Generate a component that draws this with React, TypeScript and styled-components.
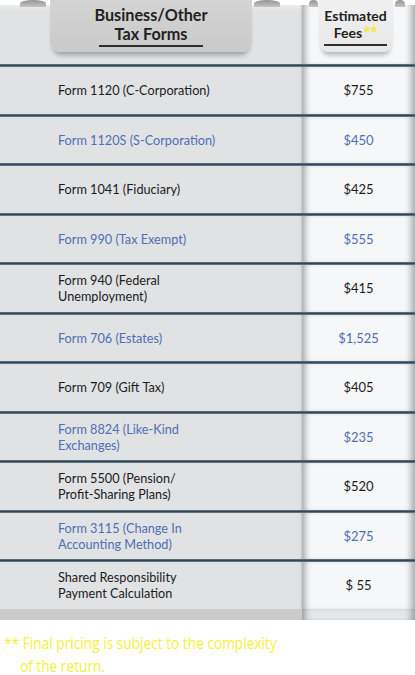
import React from "react";
import styled, { createGlobalStyle } from "styled-components";

const Global = createGlobalStyle`
  html, body { margin: 0; padding: 0; background: #ffffff; }
  body { font-family: Lato, "Open Sans", Arial, sans-serif; }
`;

type Item = { name: string[]; price: string };

const items: Item[] = [
  { name: ["Form 1120 (C-Corporation)"], price: "$755" },
  { name: ["Form 1120S (S-Corporation)"], price: "$450" },
  { name: ["Form 1041 (Fiduciary)"], price: "$425" },
  { name: ["Form 990 (Tax Exempt)"], price: "$555" },
  { name: ["Form 940 (Federal", "Unemployment)"], price: "$415" },
  { name: ["Form 706 (Estates)"], price: "$1,525" },
  { name: ["Form 709 (Gift Tax)"], price: "$405" },
  { name: ["Form 8824 (Like-Kind", "Exchanges)"], price: "$235" },
  { name: ["Form 5500 (Pension/", "Profit-Sharing Plans)"], price: "$520" },
  { name: ["Form 3115 (Change In", "Accounting Method)"], price: "$275" },
  { name: ["Shared Responsibility", "Payment Calculation"], price: "$ 55" },
];

const Page = styled.div`
  width: 415px;
  display: flex;
  flex-direction: column;
`;

const Table = styled.div`
  display: flex;
  flex-direction: column;
`;

const Grid = styled.div<{ $h: number }>`
  display: grid;
  grid-template-columns: 302px 113px;
  height: ${(p) => p.$h}px;
`;

const LeftCell = styled.div`
  background: #e1e2e4;
  box-shadow: inset -2px 0 2px -1px rgba(0, 0, 0, 0.12);
`;

const RightCell = styled.div`
  background: #f6f7f9;
  box-shadow: inset 7px 0 6px -4px rgba(0, 0, 0, 0.34),
    inset -9px 0 6px -5px rgba(0, 0, 0, 0.3);
`;

const HeadLeft = styled(LeftCell)`
  border-top: 5px solid #ffffff;
  padding-left: 50px;
  display: flex;
  align-items: flex-start;
  background: linear-gradient(to bottom, #eceded 0px, #e1e2e4 6px);
`;

const HeadRight = styled(RightCell)`
  border-top: 5px solid #ffffff;
  display: flex;
  justify-content: center;
  align-items: flex-start;
  background: linear-gradient(to bottom, #fbfbfc 0px, #f6f7f9 6px);
`;

const Curl = styled.span<{ $w: number; $side: "l" | "r"; $off: number }>`
  position: absolute;
  top: 0;
  ${(p) => (p.$side === "l" ? `left: -${p.$off}px;` : `right: -${p.$off}px;`)}
  width: ${(p) => p.$w}px;
  height: 7px;
  border-radius: 50% 50% 0 0;
  background: linear-gradient(to bottom, #949494, #c4c4c4);
`;

const LeftTab = styled.div`
  position: relative;
  margin-top: -5px;
  width: 202px;
  height: 52px;
  border-radius: 0 0 11px 11px;
  background: linear-gradient(to bottom, #d4d4d4, #cacaca);
  box-shadow: 0 6px 5px -3px rgba(0, 0, 0, 0.3);
  display: flex;
  flex-direction: column;
  align-items: center;
  padding-top: 6px;
  box-sizing: border-box;
`;

const RightTab = styled.div`
  position: relative;
  margin-top: -5px;
  margin-left: -6px;
  width: 74px;
  height: 52px;
  border-radius: 0 0 10px 10px;
  background: linear-gradient(to bottom, #f0f0f0, #e8e8e8);
  box-shadow: 0 6px 5px -3px rgba(0, 0, 0, 0.28);
  display: flex;
  flex-direction: column;
  align-items: center;
  padding-top: 8px;
  box-sizing: border-box;
`;

const HeadText = styled.div<{ $size: number; $lh: number }>`
  font-family: Lato, "Open Sans", sans-serif;
  font-weight: 700;
  font-size: ${(p) => p.$size}px;
  line-height: ${(p) => p.$lh}px;
  color: #222222;
  text-align: center;
  white-space: nowrap;
`;

const Stars = styled.sup`
  color: #f3ec3c;
  font-size: 9px;
  line-height: 0;
  vertical-align: 6px;
  margin-left: 1px;
  letter-spacing: -1px;
`;

const Rule = styled.div<{ $w: number }>`
  width: ${(p) => p.$w}px;
  height: 2px;
  background: #2e2e2e;
  margin-top: 2px;
`;

const Separator = styled.div`
  height: 3px;
  background: linear-gradient(to bottom, #7b8c98 0, #2f4556 35%, #34495a 70%, #9aa7b1 100%);
`;

const NameCell = styled(LeftCell)<{ $blue: boolean }>`
  display: flex;
  flex-direction: column;
  justify-content: center;
  padding-left: 58px;
  font-size: 12.7px;
  line-height: 16px;
  color: ${(p) => (p.$blue ? "#4e6fb5" : "#1c1c1c")};
`;

const PriceCell = styled(RightCell)<{ $blue: boolean }>`
  display: flex;
  justify-content: center;
  align-items: center;
  font-size: 13px;
  color: ${(p) => (p.$blue ? "#4e6fb5" : "#1c1c1c")};
`;

const StripLeft = styled.div`
  background: #cbcbcc;
`;

const StripRight = styled(RightCell)`
  background: #e3e5e8;
`;

const Note = styled.div`
  margin-top: 11px;
  padding-left: 5px;
  font-family: "Open Sans", sans-serif;
  font-size: 16.5px;
  line-height: 23px;
  color: #f7f03a;
  transform: scaleX(0.83);
  transform-origin: left top;
  white-space: nowrap;
`;

const NoteIndent = styled.div`
  padding-left: 19px;
`;

export default function App() {
  return (
    <Page>
      <Global />
      <Table>
        <Grid $h={64}>
          <HeadLeft>
            <LeftTab>
              <Curl $side="l" $w={26} $off={30} />
              <Curl $side="r" $w={26} $off={28} />
              <HeadText $size={16.2} $lh={18.5}>Business/Other</HeadText>
              <HeadText $size={16.2} $lh={18.5}>Tax Forms</HeadText>
              <Rule $w={104} />
            </LeftTab>
          </HeadLeft>
          <HeadRight>
            <RightTab>
              <Curl $side="l" $w={9} $off={10} />
              <Curl $side="r" $w={10} $off={12} />
              <HeadText $size={14} $lh={16.8}>Estimated</HeadText>
              <HeadText $size={14} $lh={16.8}>
                Fees<Stars>★★</Stars>
              </HeadText>
              <Rule $w={63} />
            </RightTab>
          </HeadRight>
        </Grid>
        {items.map((it, i) => (
          <React.Fragment key={i}>
            <Separator />
            <Grid $h={46.5}>
              <NameCell $blue={i % 2 === 1}>
                {it.name.map((l, j) => (
                  <div key={j}>{l}</div>
                ))}
              </NameCell>
              <PriceCell $blue={i % 2 === 1}>{it.price}</PriceCell>
            </Grid>
          </React.Fragment>
        ))}
        <Grid $h={11}>
          <StripLeft />
          <StripRight />
        </Grid>
      </Table>
      <Note>
        <div>** Final pricing is subject to the complexity</div>
        <NoteIndent>of the return.</NoteIndent>
      </Note>
    </Page>
  );
}
